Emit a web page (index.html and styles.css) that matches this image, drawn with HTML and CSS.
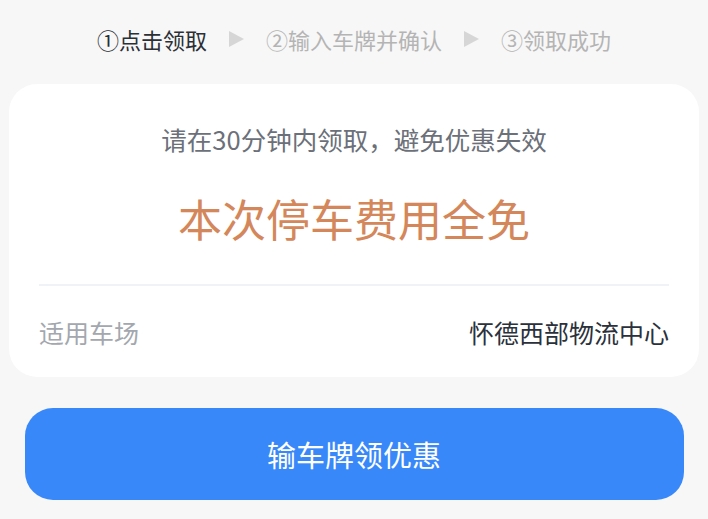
FILE: index.html
```html
<!DOCTYPE html>
<html>
<head>
    <meta charset="utf-8">
    <title>领取停车优惠</title>
    <link rel="stylesheet" href="styles.css">
</head>
<body>
    <div class="page">
        <div class="steps">
            <span class="step active">①点击领取</span>
            <span class="arrow"></span>
            <span class="step">②输入车牌并确认</span>
            <span class="arrow"></span>
            <span class="step">③领取成功</span>
        </div>

        <div class="card">
            <p class="tip">请在30分钟内领取，避免优惠失效</p>
            <p class="offer">本次停车费用全免</p>
            <div class="line"></div>
            <div class="row">
                <span class="label">适用车场</span>
                <span class="value">怀德西部物流中心</span>
            </div>
        </div>

        <button class="main-btn">输车牌领优惠</button>
    </div>
</body>
</html>
```

FILE: styles.css
```css
body{
    margin: 0;
    background-color: #f7f7f7;
    font-family: "Noto Sans CJK SC", "Noto Sans", sans-serif;
}

.page{
    display: flex;
    flex-direction: column;
    align-items: center;
    padding: 0 8px;
}

.steps{
    box-sizing: border-box;
    display: flex;
    align-items: center;
    justify-content: center;
    height: 84px;
    padding-bottom: 6px;
    gap: 22px;
    font-size: 22px;
    color: #b4b4b4;
}

.step.active{
    color: #2b2f36;
}

.arrow{
    width: 0;
    height: 0;
    border-top: 8px solid transparent;
    border-bottom: 8px solid transparent;
    border-left: 15px solid #d6d6d6;
}

.card{
    box-sizing: border-box;
    width: 690px;
    height: 293px;
    background-color: white;
    border-radius: 28px;
    padding: 0 30px;
    display: flex;
    flex-direction: column;
    align-items: center;
}

.tip{
    margin: 36px 0 0 0;
    font-size: 25.5px;
    line-height: 38px;
    color: #6b7079;
}

.offer{
    margin: 30px 0 0 0;
    font-size: 44px;
    line-height: 60px;
    color: #d4875a;
}

.line{
    width: 100%;
    height: 2px;
    background-color: #eff3f7;
    margin-top: 36px;
}

.row{
    width: 100%;
    display: flex;
    justify-content: space-between;
    align-items: center;
    height: 91px;
    font-size: 25px;
}

.label{
    color: #a3a7ae;
}

.value{
    color: #2b313b;
}

.main-btn{
    margin-top: 31px;
    width: 659px;
    height: 92px;
    border: none;
    border-radius: 28px;
    background-color: #3888fa;
    color: white;
    font-family: "Noto Sans CJK SC", "Noto Sans", sans-serif;
    font-size: 29px;
}
```
